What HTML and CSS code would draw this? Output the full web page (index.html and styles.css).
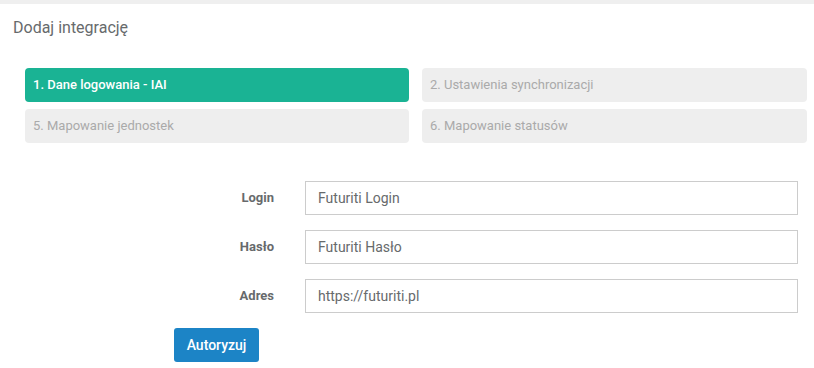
FILE: index.html
```html
<!DOCTYPE html>
<html lang="pl">
<head>
    <meta charset="UTF-8">
    <meta name="viewport" content="width=device-width, initial-scale=1.0">
    <title>Dodaj integrację</title>
    <link rel="stylesheet" href="styles.css">
</head>
<body>
    <div class="topbar"></div>

    <div class="panel">
        <h1 class="panel-title">Dodaj integrację</h1>

        <div class="steps">
            <div class="step active">1. Dane logowania - IAI</div>
            <div class="step">2. Ustawienia synchronizacji</div>
            <div class="step">5. Mapowanie jednostek</div>
            <div class="step">6. Mapowanie statusów</div>
        </div>

        <form class="login-form">
            <label class="form-label" for="login">Login</label>
            <input class="form-input" id="login" type="text" value="Futuriti Login">

            <label class="form-label" for="haslo">Hasło</label>
            <input class="form-input" id="haslo" type="text" value="Futuriti Hasło">

            <label class="form-label" for="adres">Adres</label>
            <input class="form-input" id="adres" type="text" value="https://futuriti.pl">

            <div class="form-actions">
                <button type="button" class="btn-auth">Autoryzuj</button>
            </div>
        </form>
    </div>
</body>
</html>
```

FILE: styles.css
```css
body {
    font-family: 'Roboto', 'Liberation Sans', sans-serif;
    margin: 0;
    padding: 0;
    background: #fff;
    color: #676a6c;
}

.topbar {
    height: 4px;
    background: #efefef;
}

.panel {
    padding: 14px 7px 0 13px;
}

.panel-title {
    margin: 0;
    font-size: 16px;
    font-weight: 400;
    line-height: 20px;
    color: #676a6c;
}

.steps {
    display: grid;
    grid-template-columns: 384px 1fr;
    column-gap: 13px;
    row-gap: 7px;
    margin: 30px 0 0 12px;
}

.step {
    height: 34px;
    line-height: 34px;
    padding-left: 8px;
    border-radius: 4px;
    background: #eeeeee;
    color: #aaaaaa;
    font-size: 13px;
}

.step.active {
    background: #1ab394;
    color: #fff;
    font-weight: 500;
}

.login-form {
    display: grid;
    grid-template-columns: 100px 1fr;
    column-gap: 31px;
    row-gap: 15px;
    margin: 38px 9px 0 161px;
}

.form-label {
    text-align: right;
    font-size: 13px;
    font-weight: 700;
    line-height: 34px;
    color: #676a6c;
}

.form-input {
    height: 34px;
    box-sizing: border-box;
    border: 1px solid #cccccc;
    border-radius: 0;
    padding: 0 12px;
    font-family: inherit;
    font-size: 14px;
    color: #676a6c;
    outline: none;
}

.form-actions {
    grid-column: 1 / 2;
}

.btn-auth {
    width: 85px;
    height: 34px;
    background: #1c84c6;
    color: #fff;
    border: none;
    border-radius: 3px;
    font-family: inherit;
    font-size: 14px;
    font-weight: 500;
    cursor: pointer;
}
```
